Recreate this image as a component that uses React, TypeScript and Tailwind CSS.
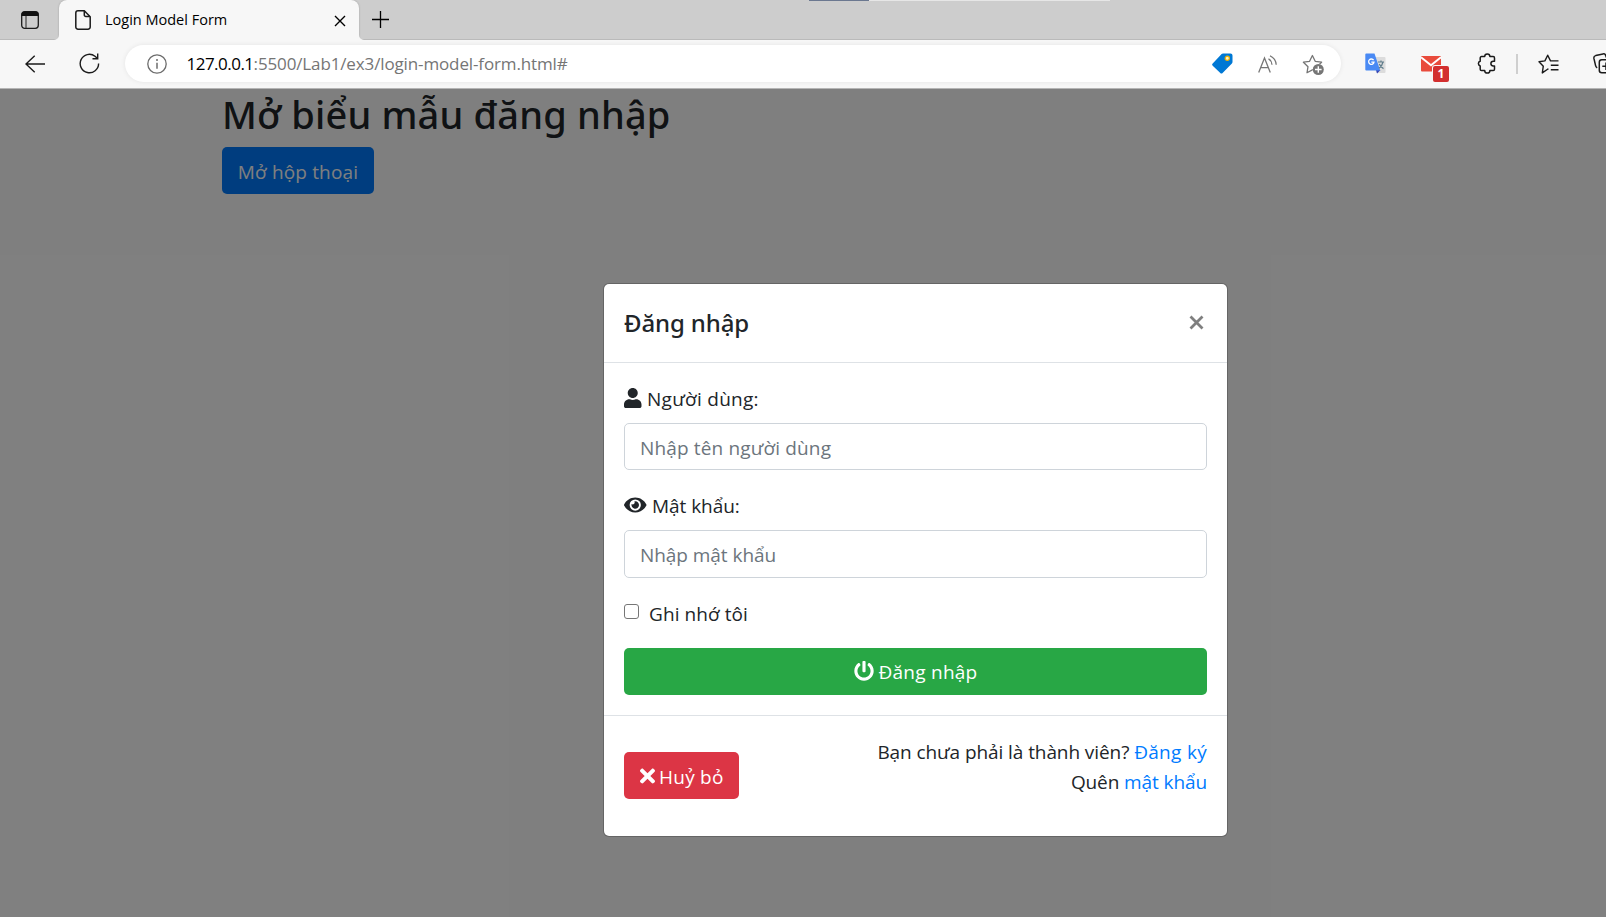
import React from "react";
import { FaEye, FaPowerOff, FaTimes, FaUser } from "react-icons/fa";

function TabStrip() {
  return (
    <div className="relative flex h-[40px] items-stretch border-b border-[#bababa] bg-[#cdcdcd]">
      <div className="flex w-[59px] items-center justify-center pt-px">
        <svg width="18" height="18" viewBox="0 0 18 18" fill="none" className="ml-px">
          <rect x="0.7" y="0.7" width="16.6" height="16.6" rx="3" stroke="#1b1b1b" strokeWidth="1.3" />
          <path d="M0.5 5V3.5a3 3 0 0 1 3-3h11a3 3 0 0 1 3 3V5z" fill="#111" />
          <path d="M5 5v12" stroke="#333" strokeWidth="1.1" />
        </svg>
      </div>
      <div className="relative z-10 -mb-px flex w-[300px] items-center rounded-t-lg bg-[#f7f7f7] pl-4 pr-[13px] shadow-[0_0_2px_rgba(0,0,0,0.25)] [clip-path:inset(-2px_-8px_0_-8px)]">
        <svg width="16" height="20" viewBox="0 0 16 20" fill="none" className="shrink-0 stroke-[#1b1b1b]" strokeWidth="1.5">
          <path d="M3 .8h6.3L15.2 6.7V17a2.2 2.2 0 0 1-2.2 2.2H3A2.2 2.2 0 0 1 .8 17V3A2.2 2.2 0 0 1 3 .8z" />
          <path d="M9.3 1v3.9a1.6 1.6 0 0 0 1.6 1.6H15" />
        </svg>
        <span className="ml-[14px] flex-1 whitespace-nowrap font-['Open_Sans',sans-serif] text-[14.5px] leading-5 text-black">
          Login Model Form
        </span>
        <svg width="12" height="12" viewBox="0 0 12 12" className="mt-px stroke-black" strokeWidth="1.4">
          <path d="M1 1l10 10M11 1L1 11" />
        </svg>
        <svg width="5" height="5" viewBox="0 0 5 5" className="absolute -left-[5px] bottom-0 fill-[#f7f7f7]">
          <path d="M5 0v5H0a5 5 0 0 0 5-5z" />
        </svg>
        <svg width="5" height="5" viewBox="0 0 5 5" className="absolute -right-[5px] bottom-0 fill-[#f7f7f7]">
          <path d="M0 0v5h5a5 5 0 0 1-5-5z" />
        </svg>
      </div>
      <div className="flex items-center pl-[13px]">
        <svg width="17" height="17" viewBox="0 0 17 17" className="stroke-black" strokeWidth="1.3">
          <path d="M8.5 0v17M0 8.5h17" />
        </svg>
      </div>
      <div className="absolute left-[809px] top-0 flex h-px w-[301px] bg-[#e6e6e6]">
        <div className="w-[60px] bg-[#6b7890]" />
      </div>
    </div>
  );
}

function Toolbar() {
  return (
    <div className="flex h-[49px] items-center overflow-hidden border-b border-[#b5b5b5] bg-[#f7f7f7] pb-px">
      <svg width="20" height="18" viewBox="0 0 20 18" fill="none" className="ml-[25px] shrink-0 stroke-[#1b1b1b]" strokeWidth="1.4">
        <path d="M9.7.8L1 9l8.700 8.200M1 9h19" />
      </svg>
      <svg width="21" height="21" viewBox="0 0 21 21" fill="none" className="ml-[34px] shrink-0 stroke-[#1b1b1b]" strokeWidth="1.4">
        <path d="M19.6 10.500A9.200 9.200 0 1 1 16 3.200l2.600 2.400" />
        <path d="M18.700.5v5.200h-5.200" />
      </svg>
      <div className="ml-[25px] flex h-[37px] w-[1216px] shrink-0 items-center rounded-full bg-white shadow-[0_0_5px_rgba(0,0,0,0.08)]">
        <svg width="20" height="20" viewBox="0 0 20 20" fill="none" className="ml-[22px] stroke-[#6c6c6c]" strokeWidth="1.3">
          <circle cx="10" cy="10" r="9.200" />
          <path d="M10 8.800v6" strokeWidth="1.5" />
          <circle cx="10" cy="6" r="1" fill="#6c6c6c" stroke="none" />
        </svg>
        <div className="ml-[19.5px] flex-1 whitespace-nowrap font-['Open_Sans',sans-serif] text-[17px] leading-6 text-[#757575]">
          <span className="tracking-[-0.52px] text-black">127.0.0.1</span>
          <span className="tracking-[-0.13px]">:5500/Lab1/ex3/login-model-form.html#</span>
        </div>
        <svg width="21" height="21" viewBox="0 0 21 21" className="shrink-0">
          <path d="M11 .5h7.500a2 2 0 0 1 2 2V9a2 2 0 0 1-.6 1.400l-9.300 9.500a1.600 1.600 0 0 1-2.300 0L.7 12.700a1.600 1.600 0 0 1 0-2.300L9.600 1.100A2 2 0 0 1 11 .5z" fill="#0078d4" />
          <circle cx="15.300" cy="5.300" r="2.100" fill="#fff3c4" stroke="#f2b200" strokeWidth="1.2" />
        </svg>
        <svg width="20" height="18" viewBox="0 0 20 18" fill="none" className="ml-[25px] shrink-0 stroke-[#767676]" strokeWidth="1.3">
          <path d="M.7 17.500L6.500 3l5.800 14.500M2.700 12.600h7.600" />
          <path d="M10.500 3.800a7.500 7.500 0 0 1 3.500 6M12 .8a10.500 10.500 0 0 1 6.200 9" />
        </svg>
        <svg width="23" height="22" viewBox="0 0 23 22" fill="none" className="ml-[24px] mr-[16px] mt-[2px] shrink-0">
          <path d="M10.800 16.100l-.4-.2-5.400 2.900 1-6.100L1.400 8.200l6.200-.9L10.400 1.500l2.800 5.800 6.400.9-2.200 2.200" stroke="#767676" strokeWidth="1.3" strokeLinejoin="round" />
          <circle cx="16.300" cy="15.500" r="5.500" fill="#767676" />
          <path d="M16.300 12.200v6.600M13 15.500h6.600" stroke="#fff" strokeWidth="1.4" />
        </svg>
      </div>
      <svg width="21" height="21" viewBox="0 0 21 21" className="ml-[24px] shrink-0">
        <path d="M9 4h10.500a1 1 0 0 1 1 1v14a1 1 0 0 1-1 1H11z" fill="#dcdcdc" />
        <path d="M11 17h4.500l-3.400 3.500z" fill="#3444b8" />
        <path d="M1.200.5h8.300l5.700 17H1.200A1 1 0 0 1 .3 16.500v-15A1 1 0 0 1 1.200.5z" fill="#4a8af4" />
        <path d="M8.600 7.200A2.700 2.700 0 1 0 9 9.200H6.300" fill="none" stroke="#fff" strokeWidth="1.3" />
        <path d="M13 9h6M16 7.600V9M18 9c-.6 2.800-2 5-4 6.300M14.300 11c.8 1.800 2.300 3.600 4.200 4.600" fill="none" stroke="#607d8b" strokeWidth="1.2" />
      </svg>
      <div className="relative ml-[35px] h-[16px] w-[20px] shrink-0">
        <svg width="20" height="16" viewBox="0 0 20 16">
          <rect width="20" height="15.500" rx="1" fill="#e94b3c" />
          <path d="M0 1.200l10 8 10-8" fill="none" stroke="#fff" strokeWidth="2" />
        </svg>
        <div className="absolute left-[12px] top-[10px] flex h-[16px] w-[16px] items-center justify-center rounded-[2px] bg-[#d32f2f] pt-px font-['Open_Sans',sans-serif] text-[12px] font-bold leading-none text-white shadow-[0_0_0_1px_#f7f7f7]">
          1
        </div>
      </div>
      <svg width="19" height="21" viewBox="0 0 19 21" fill="none" className="ml-[36px] shrink-0 stroke-[#1b1b1b]" strokeWidth="1.5" strokeLinejoin="round">
        <path d="M4.500 3.600h3.200a2.600 2.600 0 0 1 5.200 0h3.300a1.300 1.300 0 0 1 1.300 1.300v3.300h-1.200a2.400 2.400 0 0 0 0 4.800h1.200v3.200a1.300 1.300 0 0 1-1.300 1.300h-3.300a2.600 2.600 0 0 1-5.200 0H4.500a1.300 1.300 0 0 1-1.300-1.300V13a2.500 2.500 0 0 1 0-4.800V4.900a1.300 1.300 0 0 1 1.300-1.300z" />
      </svg>
      <div className="ml-[20px] h-5 w-[2px] shrink-0 bg-[#cfcfcf]" />
      <svg width="21" height="20" viewBox="0 0 21 20" fill="none" className="ml-[20px] shrink-0 stroke-[#1b1b1b]" strokeWidth="1.4" strokeLinejoin="round">
        <path d="M10.500 14.800L9.600 15.200 4.300 18.900 5.300 12.200 1 7.700 6.900 6.900 9.700 1.200 12.500 6.900H20.500M12.800 11.300h7.700M12.800 15.700h7.700" />
      </svg>
      <svg width="21" height="21" viewBox="0 0 21 21" fill="none" className="ml-[34px] shrink-0 stroke-[#1b1b1b]" strokeWidth="1.5">
        <path d="M4.200 14.800A3 3 0 0 1 2.600 12.700L.9 5.400A2.500 2.500 0 0 1 2.700 2.600L10 .9a2.500 2.500 0 0 1 2.800 1.800L13.400 4.500" />
        <rect x="6.300" y="6.800" width="14" height="13" rx="2.500" />
        <path d="M13 9.500v7.500M9.300 13.300h7.500" />
      </svg>
    </div>
  );
}

function Field({ icon, label, labelClass, placeholder, inputClass }: {
  icon: React.ReactNode;
  label: string;
  labelClass: string;
  placeholder: string;
  inputClass: string;
}) {
  return (
    <div className="mb-5">
      <label className="mb-2.5 flex h-[30px] items-center">
        {icon}
        <span className={labelClass}>{label}</span>
      </label>
      <input
        type="text"
        placeholder={placeholder}
        className={`block h-[47.300px] w-full rounded-[5px] border border-[#ced4da] bg-white px-[15px] pt-[3px] text-[19px] placeholder:text-[#6c757d] placeholder:opacity-100 ${inputClass}`}
      />
    </div>
  );
}

function LoginModal() {
  return (
    <div className="w-[625px] rounded-[6px] border border-black/20 bg-white bg-clip-padding text-[19px] leading-[30px] text-[#212529]">
      <div className="flex h-[79px] items-start justify-between border-b border-[#dee2e6] px-5 pt-5">
        <h5 className="font-['Noto_Sans',sans-serif] text-[24px] font-medium leading-[37.500px] tracking-[-0.12px]">Đăng nhập</h5>
        <svg width="15" height="15" viewBox="0 0 15 15" className="mr-[3px] mt-[10.500px] stroke-[#7f7f7f]" strokeWidth="2.8">
          <path d="M1.500 1.500l12 12M13.500 1.500l-12 12" />
        </svg>
      </div>
      <div className="p-5">
        <Field
          icon={<FaUser className="h-5 w-[17.500px]" />}
          label="Người dùng:"
          labelClass="ml-[5.500px] pt-px tracking-[0.28px]"
          placeholder="Nhập tên người dùng"
          inputClass="tracking-[0.15px]"
        />
        <Field
          icon={<FaEye className="h-5 w-[22.500px]" />}
          label="Mật khẩu:"
          labelClass="ml-[5.500px] pt-px tracking-[-0.05px]"
          placeholder="Nhập mật khẩu"
          inputClass="tracking-[-0.05px]"
        />
        <label className="mb-5 flex h-[30px] items-start">
          <input type="checkbox" className="mt-[6px] h-[15px] w-[15px] appearance-none rounded-[3px] border border-[#767676] bg-white" />
          <span className="ml-[10px] pt-px tracking-[0.08px]">Ghi nhớ tôi</span>
        </label>
        <button className="flex h-[47px] w-full items-center justify-center rounded-[5px] bg-[#28a745] text-white">
          <FaPowerOff className="h-5 w-5" />
          <span className="ml-[5px] pt-px tracking-[0.25px]">Đăng nhập</span>
        </button>
      </div>
      <div className="flex h-[121px] items-center justify-between border-t border-[#dee2e6] px-5">
        <button className="flex h-[47px] w-[115px] items-center rounded-[5px] bg-[#dc3545] pl-[15.500px] text-white">
          <FaTimes className="h-[22px] w-[15px]" />
          <span className="ml-[4.500px] pt-[2px] tracking-[0.25px]">Huỷ bỏ</span>
        </button>
        <p className="mb-[18px] whitespace-nowrap text-right">
          <span className="tracking-[-0.08px]">Bạn chưa phải là thành viên? </span>
          <a href="#" className="tracking-[0.3px] text-[#007bff]">Đăng ký</a>
          <br />
          <span className="tracking-[-0.1px]">Quên </span>
          <a href="#" className="tracking-[-0.1px] text-[#007bff]">mật khẩu</a>
        </p>
      </div>
    </div>
  );
}

export default function App() {
  return (
    <div className="flex h-[917px] w-[1606px] flex-col overflow-hidden bg-white font-['Open_Sans',sans-serif]">
      <TabStrip />
      <Toolbar />
      <main className="relative flex-1 bg-white">
        <div className="pl-[222px]">
          <h2 className="h-[58px] whitespace-nowrap font-['Noto_Sans',sans-serif] text-[38px] font-medium leading-[50px] tracking-[0.15px] text-[#212529]">
            Mở biểu mẫu đăng nhập
          </h2>
          <button className="flex h-[47px] w-[152px] items-center justify-center rounded-[5px] bg-[#007bff] pt-[4px] text-[19px] tracking-[0.15px] text-white">
            Mở hộp thoại
          </button>
        </div>
        <div className="absolute inset-0 flex items-start bg-black/50 pl-[603px] pt-[194px]">
          <LoginModal />
        </div>
      </main>
    </div>
  );
}
